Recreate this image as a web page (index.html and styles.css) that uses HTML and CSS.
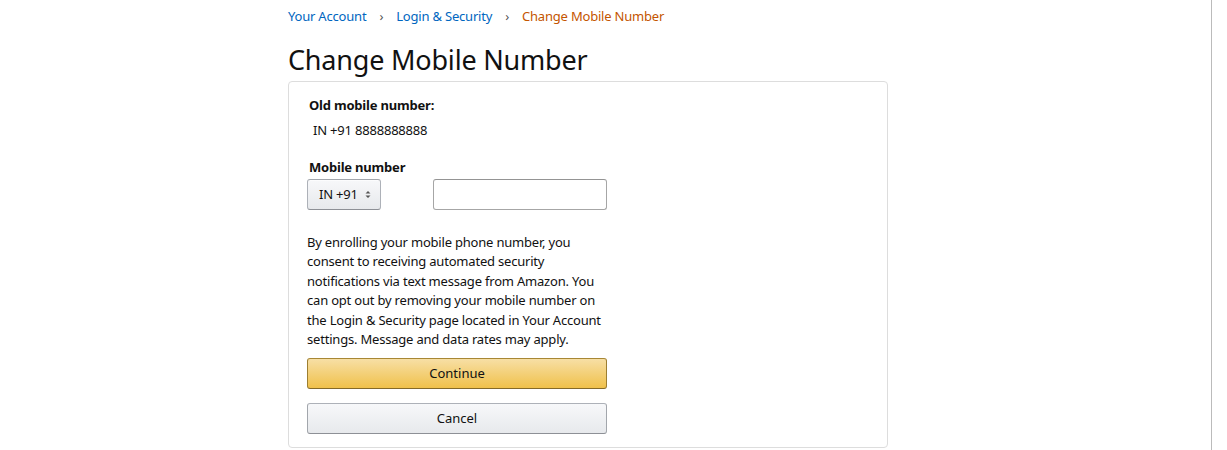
FILE: index.html
```html
<!DOCTYPE html>
<html>
<head>
<meta charset="utf-8">
<link rel="stylesheet" href="styles.css">
</head>
<body>
<div class="page">
  <div class="main">
    <nav class="crumbs">
      <a class="crumb" href="#">Your Account</a>
      <span class="sep">›</span>
      <a class="crumb" href="#">Login &amp; Security</a>
      <span class="sep">›</span>
      <span class="current">Change Mobile Number</span>
    </nav>
    <h1 class="title">Change Mobile Number</h1>
    <div class="card">
      <div class="col">
        <div class="label">Old mobile number:</div>
        <div class="old">IN +91 8888888888</div>
        <div class="label label2">Mobile number</div>
        <div class="phone-row">
          <div class="select"><span>IN +91</span><span class="arrows"><svg width="6" height="9" viewBox="0 0 6 9"><path d="M0.5 3.5L3 1 5.5 3.5z M0.5 5.5L3 8 5.5 5.5z" fill="#555"/></svg></span></div>
          <input class="input" type="text">
        </div>
        <p class="notice">By enrolling your mobile phone number, you consent to receiving automated security notifications via text message from Amazon. You can opt out by removing your mobile number on the Login &amp; Security page located in Your Account settings. Message and data rates may apply.</p>
        <button class="btn btn-primary">Continue</button>
        <button class="btn btn-secondary">Cancel</button>
      </div>
    </div>
  </div>
</div>
</body>
</html>
```
FILE: styles.css
```css
html, body { margin: 0; padding: 0; background: #fff; }
body { font-family: "Noto Sans", sans-serif; color: #111; font-size: 13px; line-height: 19px; letter-spacing: -0.2px; }
.page { width: 1212px; height: 450px; border-right: 1px solid #bbb; box-sizing: border-box; }
.main { width: 600px; margin-left: 288px; }
.crumbs { display: flex; align-items: center; padding-top: 5px; height: 22px; font-size: 13px; letter-spacing: -0.2px; }
.crumb { color: #0066c0; text-decoration: none; }
.sep { color: #555; margin: 0 13px; font-size: 13px; }
.current { color: #c45500; }
.title { font-size: 27px; font-weight: 400; line-height: 36px; margin: 15px 0 3px 0; color: #111; letter-spacing: -0.2px; }
.card { border: 1px solid #ddd; border-radius: 4px; padding: 14px 18px 14px 18px; height: 367px; box-sizing: border-box; }
.col { width: 300px; display: flex; flex-direction: column; }
.label { font-weight: 700; font-size: 13px; padding-left: 2px; }
.old { margin-top: 6px; padding-left: 6px; }
.label2 { margin-top: 18px; }
.phone-row { display: flex; gap: 52px; margin-top: 2px; }
.select { width: 74px; height: 31px; box-sizing: border-box; border: 1px solid #adb1b8; border-top-color: #a2a6ac; border-bottom-color: #8d9096; border-radius: 3px; background: linear-gradient(to bottom, #f7f8fa, #e7e9ec); display: flex; align-items: center; justify-content: space-between; padding: 0 9px 0 11px; box-shadow: 0 1px 0 rgba(255,255,255,.6) inset; }
.arrows { display: flex; }
.input { width: 174px; height: 31px; box-sizing: border-box; border: 1px solid #a6a6a6; border-top-color: #949494; border-radius: 3px; margin: 0; padding: 3px 7px; font: inherit; }
.notice { margin: 23px 0 0 0; line-height: 19.4px; }
.btn { width: 300px; height: 31px; border-radius: 3px; font: inherit; color: #111; margin: 0; padding: 0; }
.btn-primary { margin-top: 9px; background: linear-gradient(to bottom, #f7dfa5, #f0c14b); border: 1px solid #a88734; border-color: #a88734 #9c7e31 #846a29; }
.btn-secondary { margin-top: 14px; background: linear-gradient(to bottom, #f7f8fa, #e7e9ec); border: 1px solid #adb1b8; border-color: #adb1b8 #a2a6ac #8d9096; }
```
